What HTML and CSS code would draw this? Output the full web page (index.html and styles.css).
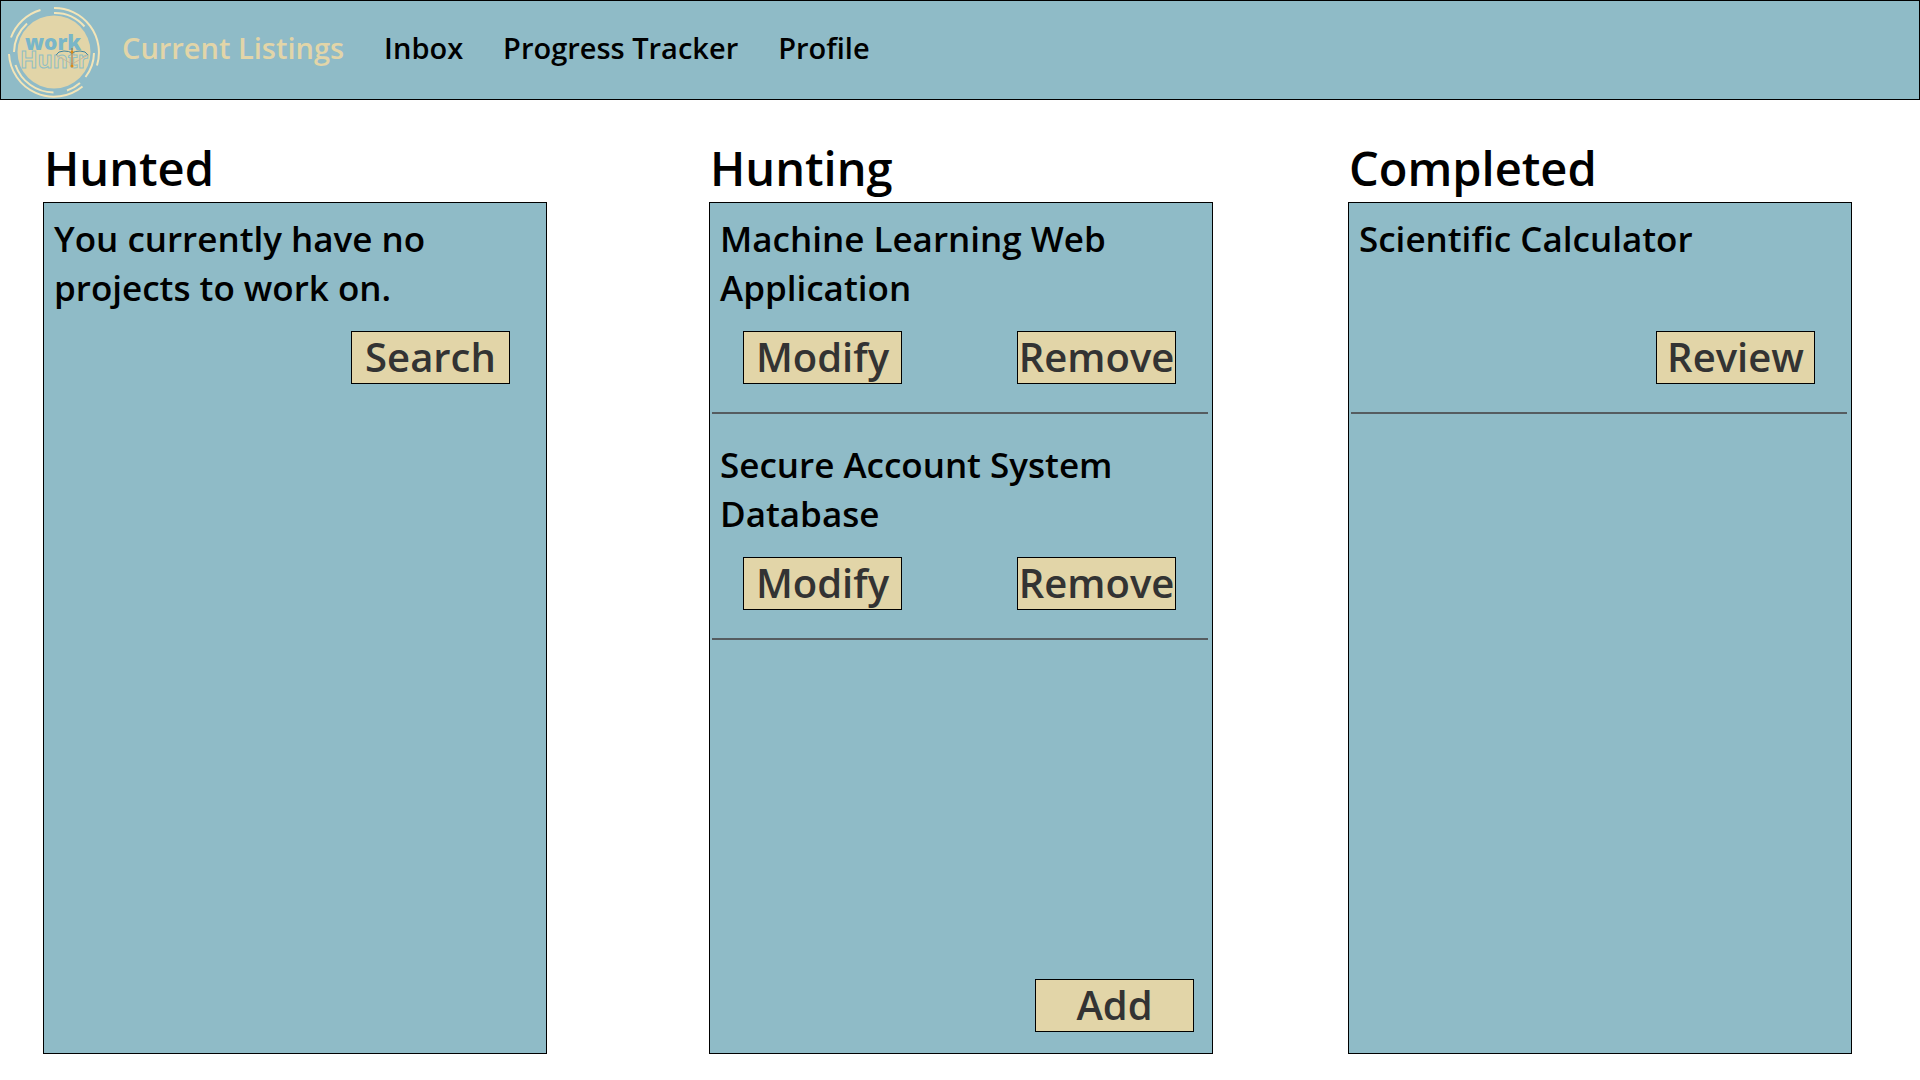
FILE: index.html
```html
<!DOCTYPE html>
<html lang="en">
<head>
<meta charset="utf-8">
<title>Work Huntr</title>
<link rel="stylesheet" href="styles.css">
</head>
<body>
<header class="topbar">
  <a class="logo" href="#" aria-label="Work Huntr home">
    <svg class="logo-art" viewBox="0 0 92 92">
      <circle class="disc" cx="46" cy="46" r="36.500"/>
      <g class="rings">
        <path d="M32.500 4A45 45 0 0 0 3 31.500"/>
        <path d="M19 17.500A40 40 0 0 0 6 46"/>
        <path d="M46 2A44.500 44.500 0 0 1 89 59.500"/>
        <path d="M46 7A39.500 39.500 0 0 1 76.500 20.500"/>
        <path d="M1 48A45 45 0 0 0 74.500 80.500"/>
        <path d="M7.500 59A40.500 40.500 0 0 0 45.500 86.500"/>
        <path d="M86 47A40 40 0 0 1 77.500 71"/>
        <path d="M72 77A40 40 0 0 1 59 84.500"/>
      </g>
      <text class="word-work" x="17" y="44">work</text>
      <text class="word-huntr" x="12" y="62">Huntr</text>
      <path class="bow" d="M48 49q2-4 8-4q5 0 8 2q3-2 8-2q6 0 8 4"/>
      <path class="string" d="M48 49l16 9l16-9"/>
      <path class="arrow" d="M64 42V60"/>
      <circle class="tip" cx="64" cy="60" r="1.500"/>
      <circle class="tip" cx="64" cy="46" r="1.500"/>
    </svg>
  </a>
  <nav class="menu">
    <a class="menu-link current" href="#">Current Listings</a>
    <a class="menu-link" href="#">Inbox</a>
    <a class="menu-link" href="#">Progress Tracker</a>
    <a class="menu-link" href="#">Profile</a>
  </nav>
</header>
<main class="board">
  <section class="column">
    <h1 class="column-title">Hunted</h1>
    <div class="panel">
      <article class="project last">
        <h2 class="project-name">You currently have no projects to work on.</h2>
        <div class="actions"><button class="btn" type="button">Search</button></div>
      </article>
    </div>
  </section>
  <section class="column">
    <h1 class="column-title">Hunting</h1>
    <div class="panel">
      <article class="project">
        <h2 class="project-name">Machine Learning Web Application</h2>
        <div class="actions pair"><button class="btn" type="button">Modify</button><button class="btn" type="button">Remove</button></div>
      </article>
      <article class="project">
        <h2 class="project-name">Secure Account System Database</h2>
        <div class="actions pair"><button class="btn" type="button">Modify</button><button class="btn" type="button">Remove</button></div>
      </article>
      <div class="panel-footer"><button class="btn" type="button">Add</button></div>
    </div>
  </section>
  <section class="column">
    <h1 class="column-title">Completed</h1>
    <div class="panel">
      <article class="project">
        <h2 class="project-name">Scientific Calculator</h2>
        <div class="actions"><button class="btn" type="button">Review</button></div>
      </article>
    </div>
  </section>
</main>
</body>
</html>
```
FILE: styles.css
```css
* {
  box-sizing: border-box;
}

body {
  margin: 0;
  background: #fff;
  color: #000;
  font-family: "Open Sans", sans-serif;
  font-weight: 600;
}

.topbar {
  display: flex;
  align-items: flex-start;
  gap: 22px;
  min-height: 100px;
  padding: 5px 7px 0;
  background: #8fbbc7;
  border: 1px solid #000;
}

.logo-art {
  display: block;
  width: 92px;
  height: 92px;
}

.disc {
  fill: #e2d5a8;
}

.rings {
  fill: none;
  stroke: #f3e5b8;
  stroke-width: 2;
}

.word-work {
  fill: #79b6c8;
  font: 800 21px "Open Sans", sans-serif;
}

.word-huntr {
  fill: #e2d5a8;
  stroke: #8fbec4;
  stroke-width: 1;
  font: 700 23px "Open Sans", sans-serif;
}

.bow {
  fill: none;
  stroke: #3f84a0;
  stroke-width: 1;
}

.string {
  fill: none;
  stroke: #c9b79a;
  stroke-width: 1;
}

.arrow {
  stroke: #a06a3a;
  stroke-width: 1;
}

.tip {
  fill: #d98a16;
}

.menu {
  display: flex;
  flex-wrap: wrap;
  gap: 40px;
  padding-top: 22px;
}

.menu-link {
  color: #000;
  font-size: 29px;
  line-height: 40px;
  text-decoration: none;
}

.current {
  color: #e2d5a8;
}

.board {
  display: grid;
  grid-template-columns: minmax(0, 504fr) minmax(0, 162fr) minmax(0, 504fr) minmax(0, 135fr) minmax(0, 504fr);
  padding: 36px 68px 26px 43px;
}

.column:nth-child(2) {
  grid-column: 3;
}

.column:nth-child(3) {
  grid-column: 5;
}

.column-title {
  margin: 0;
  padding: 0 0 2px 1px;
  font-size: 47px;
  font-weight: 600;
  line-height: 64px;
}

.panel {
  display: flex;
  flex-direction: column;
  min-height: calc(100vh - 228px);
  padding: 11px 4px 21px 2px;
  background: #8fbbc7;
  border: 1px solid #000;
}

.project {
  margin-bottom: 26px;
  padding-bottom: 28px;
  border-bottom: 2px solid #555c60;
}

.last {
  border-color: transparent;
}

.project-name {
  min-height: 98px;
  margin: 0;
  padding: 0 40px 0 8px;
  font-size: 35px;
  font-weight: 600;
  line-height: 49px;
}

.actions {
  display: flex;
  justify-content: flex-end;
  margin-top: 19px;
  padding: 0 32px 0 31px;
}

.pair {
  justify-content: space-between;
}

.panel-footer {
  display: flex;
  justify-content: flex-end;
  margin-top: auto;
  padding-right: 14px;
}

.btn {
  width: 159px;
  height: 53px;
  padding: 0 0 2px;
  background: #e2d5a8;
  border: 1px solid #000;
  color: #333;
  font-family: inherit;
  font-size: 40px;
  font-weight: 600;
  line-height: 49px;
}
```
